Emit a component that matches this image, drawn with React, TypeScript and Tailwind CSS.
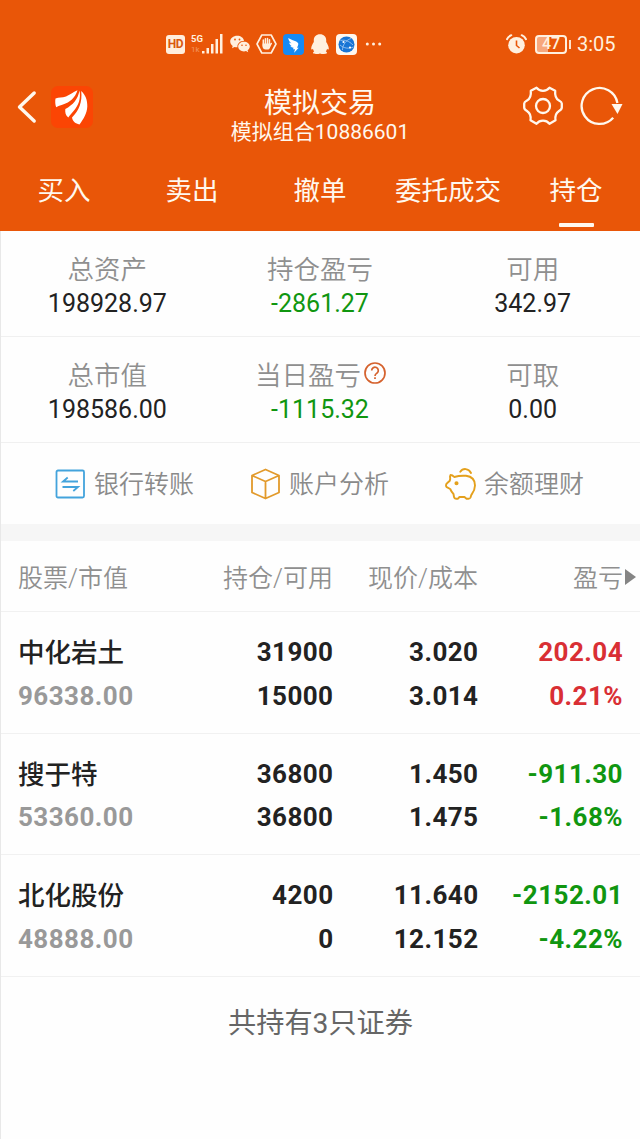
import type { ReactNode } from "react";

interface Holding {
  name: string;
  value: string;
  amount: string;
  available: string;
  price: string;
  cost: string;
  profit: string;
  percent: string;
}

const tabs = ["买入", "卖出", "撤单", "委托成交", "持仓"];

const summary = [
  [
    { label: "总资产", value: "198928.97" },
    { label: "持仓盈亏", value: "-2861.27" },
    { label: "可用", value: "342.97" },
  ],
  [
    { label: "总市值", value: "198586.00" },
    { label: "当日盈亏", value: "-1115.32", help: true },
    { label: "可取", value: "0.00" },
  ],
];

const holdings: Holding[] = [
  { name: "中化岩土", value: "96338.00", amount: "31900", available: "15000", price: "3.020", cost: "3.014", profit: "202.04", percent: "0.21%" },
  { name: "搜于特", value: "53360.00", amount: "36800", available: "36800", price: "1.450", cost: "1.475", profit: "-911.30", percent: "-1.68%" },
  { name: "北化股份", value: "48888.00", amount: "4200", available: "0", price: "11.640", cost: "12.152", profit: "-2152.01", percent: "-4.22%" },
];

function StatusBar() {
  return (
    <div className="flex h-[88px] items-center pl-[166px] text-[#fff0df]">
      <span className="flex h-[19px] w-[19px] items-center justify-center rounded-[3px] bg-[#ffeedd] text-[12px] font-bold leading-none tracking-[-0.5px] text-[#d9580f]">HD</span>
      <div className="ml-[6px] flex h-5 w-[13px] flex-col justify-between text-[9.5px] font-bold leading-[9px]">
        <span>5G</span>
        <span className="text-[8px] font-normal opacity-40">1k</span>
      </div>
      <svg className="-ml-[2px]" width="21" height="20" viewBox="0 0 21 20" fill="currentColor">
        <rect x="0" y="17" width="2.5" height="2.5" />
        <rect x="4.5" y="14" width="2.5" height="5.5" />
        <rect x="9" y="10" width="2.5" height="9.5" />
        <rect x="13.5" y="5" width="2.5" height="14.5" />
        <rect x="18" y="0" width="2.5" height="19.5" />
      </svg>
      <svg className="ml-[7px]" width="20" height="18" viewBox="0 0 20 18">
        <path fill="currentColor" d="M7.2.8C3.3.8.2 3.3.2 6.5c0 1.8 1 3.3 2.5 4.4l-.7 2.3 2.5-1.3c1 .3 1.9.4 3 .4-.6-3.7 2.6-6.6 6.6-6.6C13.5 2.9 10.700.8 7.2.8z" />
        <path fill="currentColor" d="M19.800 11.600c0-2.700-2.600-4.800-5.800-4.800s-5.800 2.100-5.800 4.800 2.600 4.800 5.800 4.800c.7 0 1.400-.1 2-.3l2.200 1.200-.6-2c1.400-.9 2.200-2.200 2.200-3.700z" />
        <g fill="#e95608">
          <circle cx="5" cy="4.500" r=".9" />
          <circle cx="9.500" cy="4.500" r=".9" />
          <circle cx="12" cy="10.200" r=".8" />
          <circle cx="16" cy="10.200" r=".8" />
        </g>
      </svg>
      <svg className="ml-[6px]" width="21" height="20" viewBox="0 0 21 20">
        <path d="M5.800 1h9.400L20 10l-4.800 9H5.800L1 10z" fill="none" stroke="currentColor" strokeWidth="1.600" strokeLinejoin="round" />
        <g stroke="currentColor" strokeWidth="1.500" strokeLinecap="round">
          <path d="M7.300 6v6M9.400 4.700v6M11.500 4.500v6M13.500 5.700v6M15.300 9.500l-1.800 3.200" />
        </g>
        <path d="M6.600 9.500h7.600v3.500c0 1.500-1.300 2.600-2.700 2.600H9.600c-1.600 0-3-1.200-3-2.800z" fill="currentColor" />
      </svg>
      <svg className="ml-[6px]" width="21" height="21" viewBox="0 0 21 21">
        <rect width="21" height="21" rx="4" fill="#168af3" />
        <path d="M5.200 4c2.500 1.600 5.500 2.300 8 3.600 2.200 1.200 2.500 2.300 1.800 4l-1 2.100h1.700l-4.600 5 .9-3.400H10l.6-1.500c-1.500 0-2.500-.5-3.200-1.700l2 .1C7.500 11.500 6.400 10 6.200 8.400l2.300 1C6.600 7.900 5.500 6 5.200 4z" fill="#fff" />
      </svg>
      <svg className="ml-[7px]" width="18" height="20" viewBox="0 0 18 20" fill="currentColor">
        <path d="M9 .3c3.800 0 6.200 2.500 6.200 5.800v2c1.300 2 2.500 4.300 2.600 6.400 0 1.400-.6 1.500-1.700.2-.3 1.300-.8 2-1.300 2.700 1.100.5 1.300 1 1.100 1.700-.4 1.200-4.900 1.100-6.900.3-2 .8-6.500.9-6.900-.3-.2-.7.100-1.200 1.100-1.700-.5-.7-1-1.400-1.300-2.700C.8 16 .2 15.900.2 14.500c.1-2.100 1.300-4.400 2.600-6.400v-2C2.800 2.800 5.200.3 9 .3z" />
      </svg>
      <svg className="ml-[7px]" width="21" height="21" viewBox="0 0 21 21">
        <rect width="21" height="21" rx="4" fill="#fff7ef" />
        <circle cx="10.500" cy="10.500" r="8" fill="#1874d5" />
        <path d="M4.500 6.500C9 5.500 13 7 17 11M6.500 16C6.500 11 10 6 15 4.500M4 11c4 3.500 9 4 13.500 2" fill="none" stroke="#a9cdf2" strokeWidth=".8" />
        <circle cx="7.500" cy="8" r="1.100" fill="#fff" />
        <circle cx="14" cy="13.500" r="1.100" fill="#fff" />
      </svg>
      <svg className="ml-[8px]" width="17" height="4" viewBox="0 0 17 4" fill="currentColor">
        <circle cx="2.300" cy="2" r="1.500" />
        <circle cx="8.500" cy="2" r="1.500" />
        <circle cx="14.700" cy="2" r="1.500" />
      </svg>
      <svg className="ml-[124px]" width="21" height="20" viewBox="0 0 21 20">
        <circle cx="10.500" cy="11.200" r="8.300" fill="currentColor" />
        <path d="M1 5.200Q2.300 2.500 5.300 1.200M20 5.200Q18.700 2.500 15.700 1.200" fill="none" stroke="currentColor" strokeWidth="2" strokeLinecap="round" />
        <path d="M10.500 6.500v5l3 2.500" fill="none" stroke="#e95608" strokeWidth="1.600" />
      </svg>
      <div className="ml-[8px] flex items-center gap-[2px]">
        <div className="flex h-[19px] w-[32px] items-center justify-center rounded-[4px] border-2 border-[#fff0df] bg-[linear-gradient(90deg,#f7a77c_40%,transparent_40%)] text-[16px] font-medium leading-none">47</div>
        <span className="h-[9px] w-[2px] bg-[#ffe3cb]" />
      </div>
      <span className="ml-[6px] text-[20px] leading-none">3:05</span>
    </div>
  );
}

function Header() {
  return (
    <header className="h-[231px] bg-[#e95608] text-[#fff8ee]">
      <StatusBar />
      <div className="flex h-[62px] items-start justify-between pl-[17px] pr-[17px]">
        <div className="flex w-[100px] items-center">
          <svg width="20" height="34" viewBox="0 0 20 34" className="-mt-[2px]">
            <path d="M17.200 3L2.500 17l14.700 14" fill="none" stroke="currentColor" strokeWidth="3.400" strokeLinecap="round" strokeLinejoin="round" />
          </svg>
          <svg width="42" height="42" viewBox="0 0 42 42" className="ml-[14px] -mt-[2px]">
            <rect width="42" height="42" rx="7" fill="#fb4504" />
            <g fill="#fff">
              <path d="M4.500 12.500C8 11.200 11 12 15 10.500 19 9 22 6 26.500 4.300 24 12 19 16.500 12 18.500 9 19.500 7 20 5.200 21.300 4.200 19 4 15 4.500 12.500z" />
              <path d="M28.500 4.500C30 13 27.500 19 23 24.500 20.500 27.500 19 29 17.300 31.500 14.500 29.500 14 26.500 14.300 23 22 19 27 13 28.500 4.500z" />
              <path d="M30.200 5C34.500 9 36.500 14 36.300 20.500 36 27.500 32.500 33 28.500 38.500 24.500 37.500 21.800 35.500 21 31.500 28 24.500 31.500 16 30.200 5z" />
            </g>
          </svg>
        </div>
        <div className="flex flex-col items-center">
          <h1 className="pt-px text-[28px] leading-[30px]">模拟交易</h1>
          <p className="text-[21px] leading-[26px]">模拟组合10886601</p>
        </div>
        <div className="flex w-[100px] items-center justify-end gap-[17px]">
          <svg width="40" height="40" viewBox="0 0 40 40" fill="none" stroke="currentColor" strokeWidth="2.300" strokeLinejoin="round" className="-mt-[2px]">
            <path d="M13.500 1.800Q16 4.800 20 4.800T26.500 1.800L32.200 4.800Q31.500 12 36 14.500Q38.800 16 38.800 17.500V21.500Q38.800 23.500 36 25Q31.500 28 32.500 34.300L26.500 37.700Q24 34.700 20 34.700T13.500 37.700L7.500 34.300Q8.500 28 4 25Q1.200 23.500 1.200 21.500V17.500Q1.200 16 4 14.500Q8.500 12 7.800 4.800Z" />
            <circle cx="20" cy="20" r="7" />
          </svg>
          <svg width="43" height="40" viewBox="0 0 43 40" className="-mt-[2px]">
            <path d="M37.400 17A18 18 0 1 0 33.200 31.800" fill="none" stroke="currentColor" strokeWidth="2.300" />
            <path d="M31.500 18h11L37.500 28z" fill="currentColor" />
          </svg>
        </div>
      </div>
      <nav className="grid h-[81px] grid-cols-5 text-[26.500px]">
        {tabs.map((tab) => (
          <div key={tab} className="flex flex-col items-center justify-between whitespace-nowrap pb-[4px] pt-[21px]">
            <span className="leading-[40px]">{tab}</span>
            {tab === "持仓" && <span className="h-[4px] w-[35px] rounded-[1px] bg-[#fff8ee]" />}
          </div>
        ))}
      </nav>
    </header>
  );
}

function Summary() {
  return (
    <section>
      {summary.map((row, i) => (
        <div key={i} className="grid h-[106px] grid-cols-3 border-b border-[#f0f0f0] pr-px pt-[20px] text-center">
          {row.map((item) => (
            <div key={item.label}>
              <div className="flex h-[35px] items-center justify-center pt-[2px] text-[26.500px] font-[350] leading-[35px] text-[#8f8f8f]">
                {item.label}
                {item.help && (
                  <svg width="22" height="22" viewBox="0 0 22 22" fill="none" stroke="#d5622e" strokeWidth="1.700" className="ml-[3px] -mr-px -mt-[5px]">
                    <circle cx="11" cy="11" r="10" />
                    <path d="M7.700 8.500a3.300 3.300 0 1 1 5.400 2.500c-1.300 1-2.100 1.500-2.100 3M11 15.200v1.800" />
                  </svg>
                )}
              </div>
              <div className={`text-[25px] leading-[36px] ${item.value.startsWith("-") ? "text-[#109610]" : "text-[#222]"}`}>{item.value}</div>
            </div>
          ))}
        </div>
      ))}
    </section>
  );
}

function Action({ icon, label }: { icon: ReactNode; label: string }) {
  return (
    <div className="flex w-[195px] items-center gap-[8px] text-[25px] font-[350] text-[#8a8a8a]">
      {icon}
      <span className="pt-[3px] leading-[36px]">{label}</span>
    </div>
  );
}

function Actions() {
  return (
    <section className="flex h-[81px] items-center pl-[54px]">
      <Action
        label="银行转账"
        icon={
          <svg width="31" height="30" viewBox="0 0 31 30" fill="none" stroke="#43a3dc" strokeWidth="1.800">
            <rect x="1.500" y="1.500" width="27.500" height="27" rx="1.500" />
            <path d="M23 12.500H8l4.700-4M7.500 18H23l-4.700 4" />
          </svg>
        }
      />
      <Action
        label="账户分析"
        icon={
          <svg width="31" height="32" viewBox="0 0 31 32" fill="none" stroke="#e29a2b" strokeWidth="1.800" strokeLinejoin="round">
            <path d="M15.500 1.500l13.500 6v17l-13.500 6-13.500-6v-17zM2 7.500l13.500 6 13.500-6M15.500 13.500v17" />
          </svg>
        }
      />
      <Action
        label="余额理财"
        icon={
          <svg width="31" height="32" viewBox="0 0 31 32" fill="none" stroke="#e4a01c" strokeWidth="1.900" strokeLinecap="round" strokeLinejoin="round">
            <path d="M5.500 7Q7.500 7 9.200 9Q15 7.300 21 7.800C27 8.500 30 12 30 17.500 30 22 28 24.500 26.300 27L25.500 29.500Q25 30.700 23.500 30.700H21.500L19.500 29H14.500L13 30.700H11Q9.300 30.700 9 29L8.500 26Q6.500 24 5.200 21L1.800 19.200Q1 18.700 1 17.500 1 16 2 15.200L4.800 12.700Q5.500 10.500 5 8.500z" />
            <path d="M15.300 3.800C18-.2 23.500.2 26 5" />
            <circle cx="11.500" cy="15.200" r="1.100" fill="#e4a01c" />
          </svg>
        }
      />
    </section>
  );
}

function HoldingRow({ item }: { item: Holding }) {
  const color = item.profit.startsWith("-") ? "text-[#109610]" : "text-[#d92f34]";
  return (
    <div className="grid h-[121.600px] grid-cols-[168px_147.500px_145px_144.500px] border-b border-[#f1f1f1] pl-[17px] pt-[19px] text-right text-[26px] font-bold leading-[43.500px] tracking-[0.450px] text-[#222]">
      <div className="text-left">
        <div className="pt-px text-[26.500px] font-medium leading-[42.500px] tracking-normal">{item.name}</div>
        <div className="text-[#999]">{item.value}</div>
      </div>
      <div>
        <div>{item.amount}</div>
        <div>{item.available}</div>
      </div>
      <div>
        <div>{item.price}</div>
        <div>{item.cost}</div>
      </div>
      <div className={color}>
        <div>{item.profit}</div>
        <div>{item.percent}</div>
      </div>
    </div>
  );
}

export default function App() {
  return (
    <div className="h-[1139px] w-[640px] overflow-hidden bg-[#fefefe] font-[Roboto,'Noto_Sans_CJK_SC',sans-serif]">
      <Header />
      <main className="h-[908px] border-l border-[#e8e8e8]">
        <Summary />
        <Actions />
        <div className="h-[17px] bg-[#f6f6f6]" />
        <div className="grid h-[71px] grid-cols-[168px_147px_145px_158px] items-center border-b border-[#f1f1f1] pl-[17px] pt-[5px] text-right text-[25px] font-[350] text-[#8f8f8f]">
          <span className="text-left">股票/市值</span>
          <span>持仓/可用</span>
          <span>现价/成本</span>
          <span className="flex items-center justify-end">
            盈亏
            <svg width="12" height="16" viewBox="0 0 12 16" className="ml-px -mt-[4px]">
              <path d="M1 0l11 8-11 8z" fill="#858585" />
            </svg>
          </span>
        </div>
        {holdings.map((item) => (
          <HoldingRow key={item.name} item={item} />
        ))}
        <p className="pt-[27px] text-center text-[28.200px] leading-[40px] text-[#666]">共持有3只证券</p>
      </main>
    </div>
  );
}
